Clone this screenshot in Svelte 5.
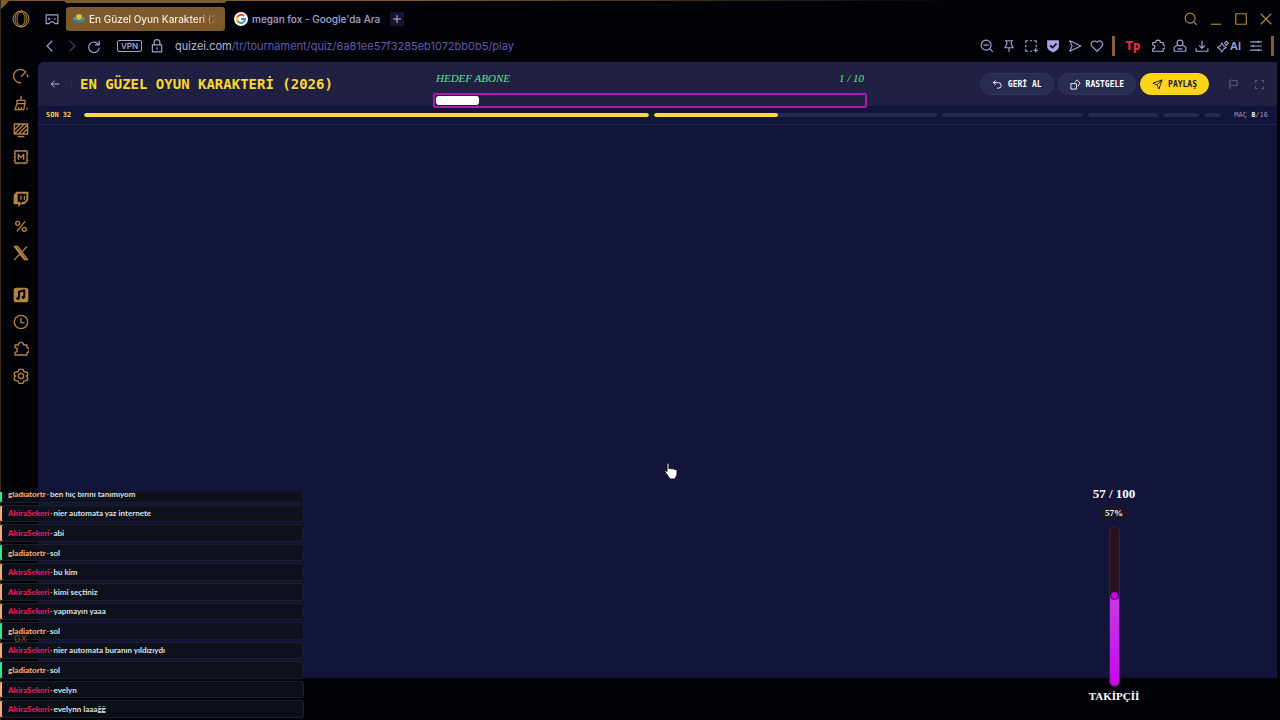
<script lang="ts">
	const icons: Record<string, string> = {
		visor: 'M2 5h20v15h-5l-3-3h-4l-3 3H2zM7 10v4M5 12h4M15 12h4',
		back: 'M16 3l-9 9 9 9',
		forward: 'M8 3l9 9-9 9',
		reload: 'M21 3v7h-7M20 10a9 9 0 1 0 1 5',
		lock: 'M4 10h16v12H4zM7 10V6a5 5 0 0 1 10 0v4M12 14v4',
		search: 'M10.500 2a8.500 8.500 0 1 0 0 17 8.500 8.500 0 0 0 0-17M17 17l5 5',
		minimize: 'M3 21h18',
		maximize: 'M3 3h18v18H3z',
		close: 'M3 3l18 18M21 3L3 21',
		zoomOut: 'M10.500 2a8.500 8.500 0 1 0 0 17 8.500 8.500 0 0 0 0-17M17 17l5 5M6 10.500h9',
		pin: 'M5 3h14M8 3v6l-3 6h14l-3-6V3M12 15v7',
		snapshot: 'M3 7V3h4M10 3h4M17 3h4v4M21 10v4M3 10v4M3 17v4h4M10 21h4M20 16v7M16.500 19.500h7',
		send: 'M3 3l19 9-19 9 4-9z',
		heart: 'M12 21L3.500 12.500a5.500 5.500 0 0 1 8.500-7 5.500 5.500 0 0 1 8.500 7z',
		puzzle: 'M3 6h5a4 4 0 1 1 8 0h5v4a3.500 3.500 0 0 1 0 7v4H3v-4a3.500 3.500 0 0 0 0-7z',
		profile: 'M12 2a5 5 0 1 0 0 10 5 5 0 0 0 0-10M7 11l-5 3v7h20v-7l-5-3M8 17h8',
		download: 'M12 3v13M7 11l5 5 5-5M2 16v5h20v-5',
		menu: 'M2 5h20M2 12h20M2 19h20M16 3v4M7 10v4M16 17v4',
		speed: 'M18 5a10 10 0 1 0-6 17M12 13l8-8M21 9a9 9 0 0 1 1 5',
		broom: 'M12 1v7M6 8h12v5H6zM6 13l-3 9h13l2-9M8 22l1-4M12 22l1-4M21 19v3',
		wallpaper: 'M2 3h20v15H2zM3 11l8-8M3 17L17 3M9 17L21 5M15 17l6-6M7 22h10',
		mods: 'M3 3h18v18H3zM8 16V8l4 5 4-5v8M1 7h2M1 12h2M1 17h2M21 7h2M21 17h2M7 1v2M17 1v2M7 21v2M17 21v2',
		percent: 'M18 5L6 20M7 5a3 3 0 1 0 0 6 3 3 0 0 0 0-6M17 14a3 3 0 1 0 0 6 3 3 0 0 0 0-6',
		x: 'M2 2h5l15 20h-5zM4 2l15 20M21 2l-8 9M10 14l-8 8',
		clock: 'M12 2a10 10 0 1 0 0 20 10 10 0 0 0 0-20M12 6v7h5',
		gear: 'M9 2h6l1 3 3 1 3 1v4l-2 1 2 2v4l-3 1-3 1-1 3H9l-1-3-3-1-3-1v-4l2-2-2-1V7l3-1 3-1zM12 8a4 4 0 1 0 0 8 4 4 0 0 0 0-8',
		arrow: 'M22 12H3M11 4l-8 8 8 8',
		undo: 'M8 3L3 8l5 5M3 8h11a6 6 0 0 1 0 12h-3',
		dice: 'M2 10h12v12H2zM10 7l6-5 6 7-5 7M6 14h.1M10 18h.1M16 7h.1',
		plane: 'M22 2L2 9l9 4 4 9zM22 2L11 13',
		flag: 'M4 22V3c6-3 9 3 16 0v11c-7 3-10-3-16 0',
		fullscreen: 'M3 8V3h5M16 3h5v5M21 16v5h-5M8 21H3v-5'
	};

	const sideGroups = [
		['speed', 'broom', 'wallpaper', 'mods'],
		['twitch', 'percent', 'x'],
		['music', 'clock', 'puzzle', 'gear']
	];

	const rounds = [
		{ size: 16, done: 16 },
		{ size: 8, done: 3.5 },
		{ size: 4, done: 0 },
		{ size: 2, done: 0 },
		{ size: 1, done: 0 },
		{ size: 0.5, done: 0 }
	];

	const messages = [
		{ user: 'gladiatortr', text: 'ben hiç birini tanımıyom' },
		{ user: 'AkiraSekeri', text: 'nier automata yaz internete' },
		{ user: 'AkiraSekeri', text: 'abi' },
		{ user: 'gladiatortr', text: 'sol' },
		{ user: 'AkiraSekeri', text: 'bu kim' },
		{ user: 'AkiraSekeri', text: 'kimi seçtiniz' },
		{ user: 'AkiraSekeri', text: 'yapmayın yaaa' },
		{ user: 'gladiatortr', text: 'sol' },
		{ user: 'AkiraSekeri', text: 'nier automata buranın yıldızıydı' },
		{ user: 'gladiatortr', text: 'sol' },
		{ user: 'AkiraSekeri', text: 'evelyn' },
		{ user: 'AkiraSekeri', text: 'evelynn laaağğ' }
	];

	const subs = { current: 1, goal: 10 };
	const followers = { current: 57, goal: 100 };
</script>

{#snippet icon(name: string, size = 14)}
	<svg class="icon" width={size} height={size} viewBox="0 0 24 24" aria-hidden="true">
		{#if name === 'twitch'}
			<path class="solid" fill-rule="evenodd" d="M5 1h18v13l-6 6h-5l-4 4v-4H1V6zM7 4v12h4v3l3-3h3l3-3V4zM11 7h2v6h-2zM16 7h2v6h-2z" />
		{:else if name === 'music'}
			<rect class="solid" x="1" y="1" width="22" height="22" rx="4" />
			<path class="note" d="M9 17V7l8-2v10" />
			<circle class="note-head" cx="7.500" cy="17" r="2.500" />
			<circle class="note-head" cx="15.500" cy="15.500" r="2.500" />
		{:else if name === 'shield'}
			<path class="solid" d="M2 2h20v11c0 5-5 8-10 10C7 21 2 18 2 13z" />
			<path class="note" d="M7 11l4 4 7-7" />
		{:else}
			<path d={icons[name]} />
		{/if}
	</svg>
{/snippet}

<div class="browser">
	<header class="chrome">
		<div class="tabs">
			<button class="opera" aria-label="Opera menu">
				<svg width="18" height="18" viewBox="0 0 18 18" aria-hidden="true">
					<circle cx="9" cy="9" r="8" />
					<ellipse cx="9" cy="9" rx="4" ry="7" />
					<ellipse cx="9" cy="9" rx="6" ry="8" />
				</svg>
			</button>
			<button class="visor" aria-label="GX">{@render icon('visor')}</button>
			<a class="tab active" href="#quiz">
				<svg width="12" height="12" viewBox="0 0 12 12" aria-hidden="true">
					<circle cx="6" cy="4" r="3" fill="#f1b93a" />
					<circle cx="2" cy="6" r="2" fill="#35a7a0" />
					<circle cx="10" cy="6" r="2" fill="#35a7a0" />
					<path d="M1 7h10l-1 3H2z" fill="#3c8195" />
				</svg>
				<span>En Güzel Oyun Karakteri (2026)</span>
			</a>
			<a class="tab" href="#search">
				<svg width="14" height="14" viewBox="0 0 14 14" fill="none" stroke-width="2" aria-hidden="true">
					<circle cx="7" cy="7" r="7" fill="#fff" />
					<path d="M10 4a4 4 0 0 0-6.500 1" stroke="#ea4335" />
					<path d="M3.500 5a4 4 0 0 0 0 4" stroke="#fbbc05" />
					<path d="M3.500 9A4 4 0 0 0 9.500 10" stroke="#34a853" />
					<path d="M9.500 10A4 4 0 0 0 11 7H7" stroke="#4285f4" />
				</svg>
				<span>megan fox - Google'da Ara</span>
			</a>
			<button class="new-tab" aria-label="New tab">
				<svg width="10" height="10" viewBox="0 0 10 10" aria-hidden="true"><path d="M5 1v8M1 5h8" /></svg>
			</button>
			<div class="window-controls">
				<button aria-label="Search tabs">{@render icon('search')}</button>
				<button aria-label="Minimize">{@render icon('minimize')}</button>
				<button aria-label="Maximize">{@render icon('maximize')}</button>
				<button aria-label="Close">{@render icon('close')}</button>
			</div>
		</div>

		<nav class="toolbar">
			<button aria-label="Back">{@render icon('back')}</button>
			<button class="dim" aria-label="Forward">{@render icon('forward')}</button>
			<button aria-label="Reload">{@render icon('reload')}</button>
			<button class="vpn">VPN</button>
			{@render icon('lock')}
			<a class="address" href="#quiz">quizei.com<span>/tr/tournament/quiz/6a81ee57f3285eb1072bb0b5/play</span></a>
			<div class="tools">
				{#each ['zoomOut', 'pin', 'snapshot', 'shield', 'send', 'heart'] as name}
					<button class={name} aria-label={name}>{@render icon(name)}</button>
				{/each}
				<i class="divider"></i>
				<button class="tp" aria-label="Extension">T<span>p</span></button>
				{#each ['puzzle', 'profile', 'download'] as name}
					<button aria-label={name}>{@render icon(name)}</button>
				{/each}
				<button class="ai">
					<svg class="icon" width="13" height="13" viewBox="0 0 24 24" aria-hidden="true">
						<path d="M9 5l3 6 5 3-5 3-3 5-3-5-5-3 5-3zM17 2l4 4-4 4-3-4z" />
					</svg>AI
				</button>
				<button aria-label="Easy setup">{@render icon('menu')}</button>
				<i class="divider"></i>
			</div>
		</nav>
	</header>

	<div class="body">
		<aside class="sidebar">
			{#each sideGroups as group}
				<div class="side-group">
					{#each group as name}
						<button aria-label={name}>{@render icon(name, 16)}</button>
					{/each}
				</div>
			{/each}
			<span class="gx">GX</span>
		</aside>

		<main class="page">
			<div class="quiz-header">
				<a class="back" href="#tournaments" aria-label="Geri">{@render icon('arrow', 10)}</a>
				<h1>EN GÜZEL OYUN KARAKTERİ (2026)</h1>
				<div class="actions">
					<button class="pill">{@render icon('undo', 11)}GERİ AL</button>
					<button class="pill">{@render icon('dice', 11)}RASTGELE</button>
					<button class="pill primary">{@render icon('plane', 11)}PAYLAŞ</button>
					<button class="ghost" aria-label="Bildir">{@render icon('flag', 11)}</button>
					<button class="ghost" aria-label="Tam ekran">{@render icon('fullscreen', 11)}</button>
				</div>
			</div>

			<div class="rounds">
				<span class="round-name">SON 32</span>
				<div class="track">
					{#each rounds as round}
						<div class="segment" style="flex-grow: {round.size}">
							<div class="segment-fill" style="width: {(round.done / round.size) * 100}%"></div>
						</div>
					{/each}
				</div>
				<span class="match">MAÇ <b>8</b>/16</span>
			</div>
		</main>
	</div>
</div>

<section class="sub-goal">
	<div class="goal-text">
		<span>HEDEF ABONE</span>
		<span>{subs.current} / {subs.goal}</span>
	</div>
	<div class="goal-bar">
		<div style="width: {(subs.current / subs.goal) * 100}%"></div>
	</div>
</section>

<section class="chat">
	<ul>
		{#each messages as message}
			<li class:green={message.user === 'gladiatortr'}>
				<b>{message.user}</b><span class="dot">·</span>{message.text}
			</li>
		{/each}
	</ul>
</section>

<section class="followers">
	<div class="count">{followers.current} / {followers.goal}</div>
	<div class="percent">{followers.current}%</div>
	<div class="meter">
		<div class="meter-fill" style="height: {(followers.current / followers.goal) * 100}%"></div>
	</div>
	<div class="meter-label">TAKİPÇİİ</div>
</section>

<svg class="cursor" width="14" height="18" viewBox="0 0 14 18" aria-hidden="true">
	<path d="M3 2c0-1.500 2-1.500 2 0v5l1-1 2 1 1-.5 1 1 1-.5 2 1v5l-2 4H6L1 10c-.5-1.500 1-2 2-.5z" />
</svg>

<style>
	:global(body) {
		background: #000;
		font-family: Inter, 'Noto Sans', sans-serif;
	}

	button {
		display: flex;
		align-items: center;
		justify-content: center;
		padding: 0;
		border: 0;
		background: none;
		color: inherit;
		font: inherit;
	}

	a {
		color: inherit;
		text-decoration: none;
	}

	.icon {
		flex: none;
		fill: none;
		stroke: currentColor;
		stroke-width: 2;
		stroke-linejoin: round;
	}

	.icon .solid {
		fill: currentColor;
		stroke: none;
	}

	.icon .note {
		stroke: #05060d;
		stroke-width: 3;
	}

	.icon .note-head {
		fill: #05060d;
		stroke: none;
	}

	.browser {
		display: flex;
		flex-direction: column;
		min-height: 100vh;
		box-sizing: border-box;
		border-left: 1px solid #3b2a17;
		background: #020309;
	}

	.chrome {
		color: #a5a3cf;
	}

	.tabs {
		display: flex;
		align-items: center;
		box-sizing: border-box;
		height: 37px;
		padding: 1px 7px 0 11px;
		background:
			linear-gradient(135deg, #7c5a2b 6px, transparent 7px) 0 0 / 12px 12px no-repeat,
			linear-gradient(90deg, #7c5a2b 420px, #020309 75%) 0 0 / 100% 1px no-repeat;
	}

	.opera {
		color: #b58345;
	}

	.opera svg {
		fill: none;
		stroke: currentColor;
	}

	.visor {
		margin: 0 7px 0 15px;
	}

	.tab {
		position: relative;
		display: flex;
		align-items: center;
		gap: 4px;
		height: 24px;
		padding: 0 8px 0 9px;
		border-radius: 3px;
		font-size: 10px;
		font-weight: 500;
		white-space: nowrap;
	}

	.tab.active {
		box-sizing: border-box;
		width: 159px;
		padding: 0 7px;
		background: #7c5a2b;
		color: #f3e7da;
	}

	.tab.active::before {
		content: '';
		position: absolute;
		top: -7px;
		left: -3px;
		right: -3px;
		height: 3px;
		background: #7c5a2b;
		clip-path: polygon(0 0, 100% 0, 98% 100%, 2% 100%);
	}

	.tab.active span {
		overflow: hidden;
		mask-image: linear-gradient(90deg, #000 85%, transparent);
	}

	.tab svg {
		flex: none;
	}

	.new-tab {
		width: 14px;
		height: 14px;
		margin-left: 2px;
		background: #15152f;
	}

	.new-tab svg {
		stroke: #b9b6e6;
	}

	.window-controls {
		display: flex;
		gap: 11px;
		margin-left: auto;
		color: #b58345;
	}

	.toolbar {
		display: flex;
		align-items: center;
		gap: 8px;
		box-sizing: border-box;
		height: 25px;
		padding: 0 6px 7px 42px;
	}

	.dim {
		opacity: 0.4;
	}

	.vpn {
		height: 12px;
		margin: 0 0 0 8px;
		padding: 0 3px;
		border: 1px solid #a5a3cf;
		border-radius: 2px;
		font-size: 8px;
		font-weight: 600;
	}

	.address {
		margin-left: 3px;
		color: #b9b7dc;
		font-size: 11px;
	}

	.address span {
		color: #6357a8;
	}

	.tools {
		display: flex;
		align-items: center;
		gap: 8px;
		margin-left: auto;
	}

	.shield {
		color: #aaa5e4;
	}

	.divider {
		width: 3px;
		height: 20px;
		background: #82602f;
	}

	.tp {
		margin: 0 3px;
		color: #e8304a;
		font: 900 12px Roboto, sans-serif;
	}

	.ai {
		font-size: 11px;
		font-weight: 600;
	}

	.body {
		display: flex;
		flex: 1;
	}

	.sidebar {
		display: flex;
		flex-direction: column;
		align-items: center;
		gap: 26px;
		width: 37px;
		padding: 6px 0 0 2px;
		box-sizing: border-box;
		color: #b58345;
	}

	.side-group {
		display: flex;
		flex-direction: column;
		gap: 11px;
	}

	.gx {
		position: relative;
		z-index: 2;
		margin: auto 0 73px;
		color: #7a5429;
		font-size: 9px;
		line-height: 16px;
	}

	.page {
		flex: 1;
		margin: 0 3px 42px 0;
		border-radius: 6px 0 0 0;
		background: #121439;
		overflow: hidden;
	}

	.quiz-header {
		display: flex;
		align-items: center;
		height: 44px;
		padding: 0 7px 0 12px;
		background: #1f2042;
	}

	.back {
		display: flex;
		padding-right: 11px;
		border-right: 1px solid #292a4c;
		color: #cfd0ea;
	}

	h1 {
		margin: 0 0 0 8px;
		color: #fdd82f;
		font: bold 14px 'DejaVu Sans Mono', monospace;
	}

	.actions {
		display: flex;
		align-items: center;
		gap: 4px;
		margin-left: auto;
	}

	.pill {
		gap: 5px;
		height: 22px;
		padding: 0 11px;
		border: 1px solid #33345c;
		border-radius: 11px;
		background: #2a2b50;
		color: #fff;
		font: bold 8px 'DejaVu Sans Mono', monospace;
	}

	.pill.primary {
		margin-right: 9px;
		border-color: #fdd517;
		background: #fdd517;
		color: #17183a;
	}

	.ghost {
		width: 22px;
		height: 22px;
		color: #65668a;
	}

	.rounds {
		display: flex;
		align-items: center;
		gap: 13px;
		height: 18px;
		padding: 0 9px 0 8px;
		border-bottom: 1px solid #23254b;
		font: 7px 'DejaVu Sans Mono', monospace;
	}

	.round-name {
		color: #fdd82f;
		font-weight: bold;
	}

	.match {
		color: #9495b8;
	}

	.match b {
		color: #fff;
	}

	.track {
		display: flex;
		flex: 1;
		gap: 5px;
	}

	.segment {
		flex-basis: 0;
		height: 4px;
		border-radius: 2px;
		background: #25274b;
		overflow: hidden;
	}

	.segment-fill {
		height: 100%;
		border-radius: 2px;
		background: #fdd835;
	}

	.sub-goal {
		position: absolute;
		top: 70px;
		left: 433px;
		width: 434px;
	}

	.goal-text {
		display: flex;
		justify-content: space-between;
		padding: 0 3px;
		color: #5fe39a;
		font: italic 11px/16px 'Liberation Serif', serif;
	}

	.goal-bar {
		height: 9px;
		margin-top: 7px;
		padding: 1px;
		border: 2px solid #a81cae;
		border-radius: 2px;
	}

	.goal-bar div {
		height: 100%;
		border-radius: 3px;
		background: #fff;
	}

	.chat {
		position: absolute;
		left: 0;
		bottom: 2px;
		display: flex;
		align-items: flex-end;
		width: 304px;
		height: 226px;
		overflow: hidden;
	}

	.chat ul {
		display: grid;
		flex: none;
		grid-auto-rows: 1fr;
		gap: 2px;
		width: 100%;
		height: 233px;
		margin: 0;
		padding: 0;
		list-style: none;
	}

	.chat li {
		display: flex;
		align-items: center;
		padding-left: 6px;
		border: 1px solid #1a1f29;
		border-left: 2px solid #f5ab72;
		border-radius: 3px;
		background: rgba(13, 18, 24, 0.88);
		color: #dfe1e6;
		font: 700 8px/12px Lato, sans-serif;
	}

	.chat li.green {
		border-left-color: #2fe795;
	}

	.chat b {
		color: #e01e5f;
		font-weight: 900;
	}

	.chat .green b {
		color: #f5ab72;
	}

	.dot {
		margin: 0 1px;
		color: #9a9ca5;
	}

	.followers {
		position: absolute;
		top: 486px;
		right: 126px;
		display: flex;
		flex-direction: column;
		align-items: center;
		width: 80px;
		color: #fff;
		font-family: 'Liberation Serif', serif;
		font-weight: bold;
	}

	.count {
		font-size: 13px;
		line-height: 16px;
	}

	.percent {
		margin: 4px 0 6px;
		padding: 0 5px;
		border-radius: 7px;
		background: #1a1527;
		font-size: 9px;
		line-height: 14px;
	}

	.meter {
		display: flex;
		align-items: flex-end;
		box-sizing: border-box;
		width: 11px;
		height: 161px;
		border: 1px solid #4a1a35;
		border-radius: 6px;
		background: #29121f;
	}

	.meter-fill {
		position: relative;
		width: 100%;
		border-radius: 0 0 5px 5px;
		background: linear-gradient(#c73ce6, #c308ea);
	}

	.meter-fill::before {
		content: '';
		position: absolute;
		top: -4px;
		left: 0;
		width: 7px;
		height: 7px;
		border: 1px solid #35053f;
		border-radius: 50%;
		background: #c308ea;
	}

	.meter-label {
		font-size: 11px;
		line-height: 18px;
	}

	.cursor {
		position: absolute;
		top: 462px;
		left: 664px;
		fill: #fff;
		stroke: #0a0b20;
	}
</style>
